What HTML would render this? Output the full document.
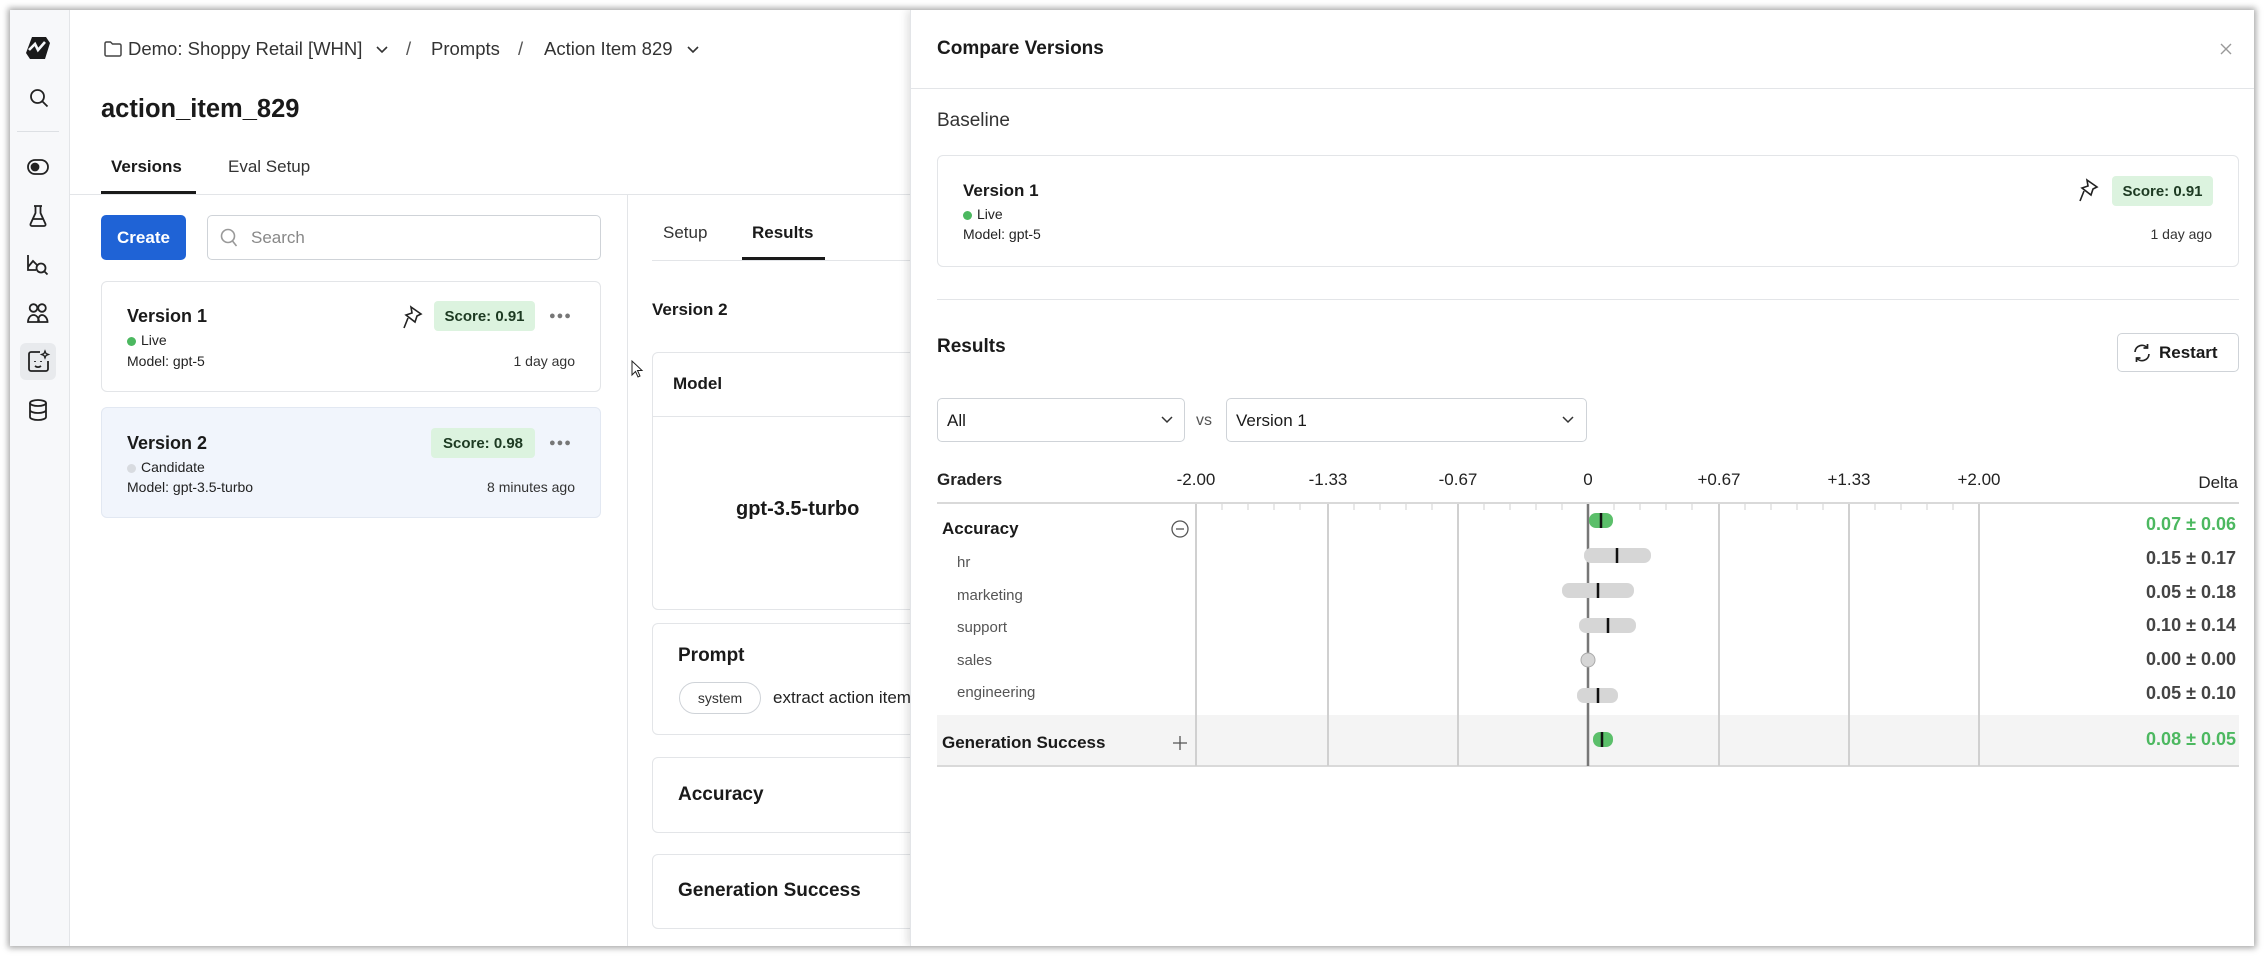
<!DOCTYPE html>
<html><head><meta charset="utf-8"><style>
*{box-sizing:border-box;margin:0;padding:0}
body{width:2265px;height:956px;background:#fff;font-family:"Liberation Sans",sans-serif;color:#1a1a1a;position:relative;overflow:hidden}
.a{position:absolute}
#win{left:10px;top:10px;width:2244px;height:936px;background:#fff;box-shadow:0 0 6px 2px rgba(0,0,0,.35);overflow:hidden}
.t{position:absolute;white-space:nowrap;line-height:1}
.card{position:absolute;border:1px solid #e3e5e8;border-radius:6px;background:#fff}
.badge{position:absolute;background:#dcf3df;border-radius:4px;font-size:15px;font-weight:600;color:#1d3a22;display:flex;align-items:center;justify-content:center}
.dot{display:inline-block;width:9px;height:9px;border-radius:50%;vertical-align:middle;margin-right:5px}
.dots{position:absolute;font-size:11px;color:#777;letter-spacing:1px}
svg{position:absolute;overflow:visible}
</style></head><body>
<div id="win" class="a">
 <div class="a" style="left:0;top:0;width:60px;height:936px;background:#f7f8fa;border-right:1px solid #e3e5e8"></div>
 <div class="a" style="left:7px;top:121px;width:42px;height:1px;background:#dde0e4"></div>
 <div class="a" style="left:10px;top:333px;width:36px;height:37px;background:#e8eaed;border-radius:6px"></div>
 <svg style="left:16px;top:26px" width="24" height="24" viewBox="0 0 24 24"><path d="M6 1h14l4 6-5 16H4L0 17z" fill="#1a1a1a"/><path d="M3 14l6-6 3 6 7-8" stroke="#f7f8fa" stroke-width="2.6" fill="none"/></svg>
 <svg style="left:19px;top:78px" width="20" height="20" viewBox="0 0 20 20" fill="none" stroke="#222" stroke-width="1.8"><circle cx="8.5" cy="8.5" r="6.5"/><path d="M13.5 13.5l5 5"/></svg>
 <svg style="left:17px;top:149px" width="22" height="16" viewBox="0 0 22 16" fill="none" stroke="#222" stroke-width="1.8"><rect x="1" y="1" width="20" height="14" rx="7"/><circle cx="8" cy="8" r="3.5" fill="#222"/></svg>
 <svg style="left:19px;top:195px" width="18" height="22" viewBox="0 0 18 22" fill="none" stroke="#222" stroke-width="1.8"><path d="M5 1h8M6.5 1v7L1.5 19a1.5 1.5 0 0 0 1.4 2h12.2a1.5 1.5 0 0 0 1.4-2L11.5 8V1M3.5 14h11"/></svg>
 <svg style="left:17px;top:244px" width="22" height="22" viewBox="0 0 22 22" fill="none" stroke="#222" stroke-width="1.8"><path d="M1 1v15h8M1 13l5-6 4 4"/><circle cx="14" cy="14" r="4.5"/><path d="M17.5 17.5l3 3"/></svg>
 <svg style="left:17px;top:293px" width="22" height="20" viewBox="0 0 22 20" fill="none" stroke="#222" stroke-width="1.8"><circle cx="6.5" cy="5" r="3.8"/><circle cx="15" cy="5" r="3.8"/><path d="M1 19c0-4 2.5-7 5.5-7s5.5 3 5.5 7zM11 19c0-4 1.5-7 4-7s5.5 3 5.5 7z"/></svg>
 <svg style="left:18px;top:340px" width="22" height="22" viewBox="0 0 22 22" fill="none" stroke="#222" stroke-width="1.8"><path d="M12 2H3a2 2 0 0 0-2 2v15a2 2 0 0 0 2 2h15a2 2 0 0 0 2-2v-8"/><path d="M7 11v1M13 11v1M7 16c2 1.5 4 1.5 6 0"/><path d="M17 1l1 2.5 2.5 1-2.5 1-1 2.5-1-2.5-2.5-1 2.5-1z" stroke-width="1.3"/></svg>
 <svg style="left:19px;top:389px" width="18" height="22" viewBox="0 0 18 22" fill="none" stroke="#222" stroke-width="1.8"><ellipse cx="9" cy="4" rx="8" ry="3"/><path d="M1 4v14c0 1.7 3.6 3 8 3s8-1.3 8-3V4M1 11c0 1.7 3.6 3 8 3s8-1.3 8-3"/></svg>

 <svg style="left:94px;top:31px" width="18" height="16" viewBox="0 0 18 16" fill="none" stroke="#444" stroke-width="1.5"><path d="M1 2.5a1.5 1.5 0 0 1 1.5-1.5h4l2 2h7a1.5 1.5 0 0 1 1.5 1.5v9a1.5 1.5 0 0 1-1.5 1.5h-13A1.5 1.5 0 0 1 1 13.5z"/></svg>
 <div class="t" style="left:118px;top:30px;font-size:18.5px;color:#333">Demo: Shoppy Retail [WHN]</div>
 <svg style="left:365px;top:35px" width="14" height="10" viewBox="0 0 14 10" fill="none" stroke="#333" stroke-width="1.6"><path d="M2 2l5 5 5-5"/></svg>
 <div class="t" style="left:396px;top:30px;font-size:18.5px;color:#555">/</div>
 <div class="t" style="left:421px;top:30px;font-size:18.5px;color:#333">Prompts</div>
 <div class="t" style="left:508px;top:30px;font-size:18.5px;color:#555">/</div>
 <div class="t" style="left:534px;top:30px;font-size:18.5px;color:#333">Action Item 829</div>
 <svg style="left:676px;top:35px" width="14" height="10" viewBox="0 0 14 10" fill="none" stroke="#333" stroke-width="1.6"><path d="M2 2l5 5 5-5"/></svg>

 <div class="t" style="left:91px;top:87px;font-size:25.5px;font-weight:700;color:#1a1a1a">action_item_829</div>
 <div class="t" style="left:101px;top:148px;font-size:17px;font-weight:600">Versions</div>
 <div class="a" style="left:91px;top:181px;width:95px;height:3px;background:#1a1a1a"></div>
 <div class="t" style="left:218px;top:148px;font-size:17px;color:#333">Eval Setup</div>
 <div class="a" style="left:60px;top:184px;width:2200px;height:1px;background:#e3e5e8"></div>
 <div class="a" style="left:617px;top:185px;width:1px;height:760px;background:#e3e5e8"></div>

 <div class="a" style="left:91px;top:205px;width:85px;height:45px;background:#1f63d6;border-radius:5px;color:#fff;font-size:17px;font-weight:700;display:flex;align-items:center;justify-content:center">Create</div>
 <div class="a" style="left:197px;top:205px;width:394px;height:45px;border:1px solid #cfd3d8;border-radius:5px"></div>
 <svg style="left:210px;top:218px" width="18" height="20" viewBox="0 0 18 20" fill="none" stroke="#999" stroke-width="1.6"><circle cx="8" cy="8" r="6.5"/><path d="M12.5 13l4 5"/></svg>
 <div class="t" style="left:241px;top:219px;font-size:17px;color:#888">Search</div>

 <div class="card" style="left:91px;top:271px;width:500px;height:111px"></div>
 <div class="t" style="left:117px;top:297px;font-size:18px;font-weight:600">Version 1</div>
 <div class="t" style="left:117px;top:323px;font-size:14px;color:#222"><span class="dot" style="background:#4cb860"></span>Live</div>
 <div class="t" style="left:117px;top:344px;font-size:14px;color:#222">Model: gpt-5</div>
 <div class="t" style="right:1679px;top:344px;font-size:14px;color:#333">1 day ago</div>
 <svg style="left:393px;top:296px" width="20" height="24" viewBox="0 0 20 24" fill="none" stroke="#222" stroke-width="1.6"><path d="M8 1l10 7-4 2-2 6-9-7 6-2z"/><path d="M5 12l-4 10"/></svg>
 <div class="badge" style="left:424px;top:291px;width:101px;height:30px">Score: 0.91</div>
 <div class="dots" style="left:539px;top:300px">●●●</div>

 <div class="card" style="left:91px;top:397px;width:500px;height:111px;background:#f1f5fc;border-color:#e2e8f2"></div>
 <div class="t" style="left:117px;top:424px;font-size:18px;font-weight:600">Version 2</div>
 <div class="t" style="left:117px;top:450px;font-size:14px;color:#222"><span class="dot" style="background:#d8dbe0"></span>Candidate</div>
 <div class="t" style="left:117px;top:470px;font-size:14px;color:#222">Model: gpt-3.5-turbo</div>
 <div class="t" style="right:1679px;top:470px;font-size:14px;color:#333">8 minutes ago</div>
 <div class="badge" style="left:421px;top:418px;width:104px;height:30px">Score: 0.98</div>
 <div class="dots" style="left:539px;top:427px">●●●</div>

 <div class="t" style="left:653px;top:214px;font-size:17px;color:#333">Setup</div>
 <div class="t" style="left:742px;top:214px;font-size:17px;font-weight:600">Results</div>
 <div class="a" style="left:732px;top:247px;width:83px;height:3px;background:#1a1a1a"></div>
 <div class="a" style="left:642px;top:250px;width:400px;height:1px;background:#e3e5e8"></div>
 <div class="t" style="left:642px;top:291px;font-size:17px;font-weight:600">Version 2</div>
 <div class="card" style="left:642px;top:342px;width:400px;height:258px"></div>
 <div class="a" style="left:642px;top:406px;width:400px;height:1px;background:#e3e5e8"></div>
 <div class="t" style="left:663px;top:365px;font-size:17px;font-weight:600">Model</div>
 <div class="t" style="left:726px;top:489px;font-size:20px;font-weight:700">gpt-3.5-turbo</div>
 <div class="card" style="left:642px;top:613px;width:400px;height:112px"></div>
 <div class="t" style="left:668px;top:636px;font-size:19px;font-weight:700">Prompt</div>
 <div class="a" style="left:669px;top:672px;width:82px;height:32px;border:1px solid #cfd3d8;border-radius:16px;font-size:14px;color:#333;display:flex;align-items:center;justify-content:center">system</div>
 <div class="t" style="left:763px;top:679px;font-size:17px;color:#222">extract action items</div>
 <div class="card" style="left:642px;top:747px;width:400px;height:76px"></div>
 <div class="t" style="left:668px;top:775px;font-size:19px;font-weight:700">Accuracy</div>
 <div class="card" style="left:642px;top:844px;width:400px;height:75px"></div>
 <div class="t" style="left:668px;top:871px;font-size:19px;font-weight:700">Generation Success</div>
 <svg style="left:621px;top:350px" width="12" height="18" viewBox="0 0 12 18" fill="#fff" stroke="#222" stroke-width="1"><path d="M1 1v14l3.5-3.5 2.5 5.5 2-1-2.5-5.5H11z"/></svg>

 <div class="a" style="left:900px;top:0;width:1344px;height:936px;background:#fff;box-shadow:-3px 0 8px rgba(0,0,0,.12);border-left:1px solid #e3e5e8">
  <div class="t" style="left:26px;top:29px;font-size:19px;font-weight:600">Compare Versions</div>
  <svg style="left:1309px;top:33px" width="12" height="12" viewBox="0 0 12 12" stroke="#999" stroke-width="1.4"><path d="M1 1l10 10M11 1L1 11"/></svg>
  <div class="a" style="left:0;top:78px;width:1344px;height:1px;background:#e3e5e8"></div>
  <div class="t" style="left:26px;top:101px;font-size:19px;color:#333">Baseline</div>
  <div class="card" style="left:26px;top:145px;width:1302px;height:112px"></div>
  <div class="t" style="left:52px;top:172px;font-size:17px;font-weight:600">Version 1</div>
  <div class="t" style="left:52px;top:197px;font-size:14px;color:#222"><span class="dot" style="background:#4cb860"></span>Live</div>
  <div class="t" style="left:52px;top:217px;font-size:14px;color:#222">Model: gpt-5</div>
  <div class="t" style="right:42px;top:217px;font-size:14px;color:#333">1 day ago</div>
  <svg style="left:1168px;top:169px" width="20" height="24" viewBox="0 0 20 24" fill="none" stroke="#222" stroke-width="1.6"><path d="M8 1l10 7-4 2-2 6-9-7 6-2z"/><path d="M5 12l-4 10"/></svg>
  <div class="badge" style="left:1201px;top:166px;width:101px;height:30px">Score: 0.91</div>
  <div class="a" style="left:26px;top:289px;width:1302px;height:1px;background:#e3e5e8"></div>
  <div class="t" style="left:26px;top:327px;font-size:19px;font-weight:600">Results</div>
  <div class="a" style="left:1206px;top:323px;width:122px;height:39px;border:1px solid #cfd3d8;border-radius:5px"></div>
  <svg style="left:1221px;top:333px" width="20" height="20" viewBox="0 0 20 20" fill="none" stroke="#222" stroke-width="1.7"><path d="M3 9a7 7 0 0 1 12.5-4M17 11a7 7 0 0 1-12.5 4"/><path d="M15.5 1v4h-4M4.5 19v-4h4"/></svg>
  <div class="t" style="left:1248px;top:334px;font-size:17px;font-weight:600">Restart</div>
  <div class="a" style="left:26px;top:388px;width:248px;height:44px;border:1px solid #cfd3d8;border-radius:5px"></div>
  <div class="t" style="left:36px;top:402px;font-size:17px">All</div>
  <svg style="left:250px;top:406px" width="12" height="8" viewBox="0 0 12 8" fill="none" stroke="#333" stroke-width="1.5"><path d="M1 1l5 5 5-5"/></svg>
  <div class="t" style="left:285px;top:403px;font-size:16px;color:#555">vs</div>
  <div class="a" style="left:315px;top:388px;width:361px;height:44px;border:1px solid #cfd3d8;border-radius:5px"></div>
  <div class="t" style="left:325px;top:402px;font-size:17px">Version 1</div>
  <svg style="left:651px;top:406px" width="12" height="8" viewBox="0 0 12 8" fill="none" stroke="#333" stroke-width="1.5"><path d="M1 1l5 5 5-5"/></svg>

  <div class="t" style="left:26px;top:461px;font-size:17px;font-weight:600;color:#222">Graders</div>
  <div class="t" style="right:16px;top:464px;font-size:17px;color:#222">Delta</div>
  <div class="t" style="left:265px;top:461px;width:40px;text-align:center;font-size:17px;color:#222">-2.00</div>
  <div class="t" style="left:387px;top:461px;width:60px;text-align:center;font-size:17px;color:#222">-1.33</div>
  <div class="t" style="left:517px;top:461px;width:60px;text-align:center;font-size:17px;color:#222">-0.67</div>
  <div class="t" style="left:657px;top:461px;width:40px;text-align:center;font-size:17px;color:#222">0</div>
  <div class="t" style="left:778px;top:461px;width:60px;text-align:center;font-size:17px;color:#222">+0.67</div>
  <div class="t" style="left:908px;top:461px;width:60px;text-align:center;font-size:17px;color:#222">+1.33</div>
  <div class="t" style="left:1038px;top:461px;width:60px;text-align:center;font-size:17px;color:#222">+2.00</div>
  <div class="a" style="left:26px;top:705px;width:1302px;height:51px;background:#f4f4f4"></div>
  <div class="a" style="left:26px;top:492px;width:1302px;height:2px;background:#d9d9d9"></div>
  <div class="a" style="left:26px;top:755px;width:1302px;height:2px;background:#d9d9d9"></div>
  <svg style="left:0;top:0" width="1344" height="800">
   <g stroke="#d0d0d0" stroke-width="2">
    <path d="M285 494V756M417 494V756M547 494V756M808 494V756M938 494V756M1068 494V756"/>
   </g>
   <g stroke="#d0d0d0" stroke-width="1">
    <path d="M311 494v6M337 494v6M363 494v6M389 494v6M443 494v6M469 494v6M495 494v6M521 494v6M573 494v6M599 494v6M625 494v6M651 494v6M703 494v6M729 494v6M755 494v6M781 494v6M834 494v6M860 494v6M886 494v6M912 494v6M964 494v6M990 494v6M1016 494v6M1042 494v6"/>
   </g>
   <path d="M677 494V756" stroke="#777" stroke-width="2.5"/>
   <rect x="678" y="503" width="24" height="15" rx="7" fill="#5bbf6a"/><path d="M690 503v15" stroke="#111" stroke-width="2.5"/>
   <rect x="673" y="538" width="67" height="15" rx="7" fill="#d6d6d6"/><path d="M706 538v15" stroke="#111" stroke-width="2.5"/>
   <rect x="651" y="573" width="72" height="15" rx="7" fill="#d6d6d6"/><path d="M687 573v15" stroke="#111" stroke-width="2.5"/>
   <rect x="668" y="608" width="57" height="15" rx="7" fill="#d6d6d6"/><path d="M697 608v15" stroke="#111" stroke-width="2.5"/>
   <ellipse cx="677" cy="650" rx="7" ry="7" fill="#d6d6d6" stroke="#aaa" stroke-width="1"/>
   <rect x="666" y="678" width="41" height="15" rx="7" fill="#d6d6d6"/><path d="M687 678v15" stroke="#111" stroke-width="2.5"/>
   <rect x="682" y="722" width="20" height="15" rx="7" fill="#5bbf6a"/><path d="M691 722v15" stroke="#111" stroke-width="2.5"/>
   <g fill="none" stroke="#555" stroke-width="1.3"><circle cx="269" cy="519" r="8"/><path d="M265 519h8"/><path d="M269 726v14M262 733h14"/></g>
  </svg>
  <div class="t" style="left:31px;top:510px;font-size:17px;font-weight:700">Accuracy</div>
  <div class="t" style="left:46px;top:545px;font-size:15px;color:#555">hr</div>
  <div class="t" style="left:46px;top:578px;font-size:15px;color:#555">marketing</div>
  <div class="t" style="left:46px;top:610px;font-size:15px;color:#555">support</div>
  <div class="t" style="left:46px;top:643px;font-size:15px;color:#555">sales</div>
  <div class="t" style="left:46px;top:675px;font-size:15px;color:#555">engineering</div>
  <div class="t" style="left:31px;top:724px;font-size:17px;font-weight:700">Generation Success</div>
  <div class="t" style="right:18px;top:505px;font-size:18px;font-weight:600;color:#4cb860">0.07 ± 0.06</div>
  <div class="t" style="right:18px;top:539px;font-size:18px;font-weight:600;color:#444">0.15 ± 0.17</div>
  <div class="t" style="right:18px;top:573px;font-size:18px;font-weight:600;color:#444">0.05 ± 0.18</div>
  <div class="t" style="right:18px;top:606px;font-size:18px;font-weight:600;color:#444">0.10 ± 0.14</div>
  <div class="t" style="right:18px;top:640px;font-size:18px;font-weight:600;color:#444">0.00 ± 0.00</div>
  <div class="t" style="right:18px;top:674px;font-size:18px;font-weight:600;color:#444">0.05 ± 0.10</div>
  <div class="t" style="right:18px;top:720px;font-size:18px;font-weight:600;color:#4cb860">0.08 ± 0.05</div>
 </div>
</div>
</body></html>
